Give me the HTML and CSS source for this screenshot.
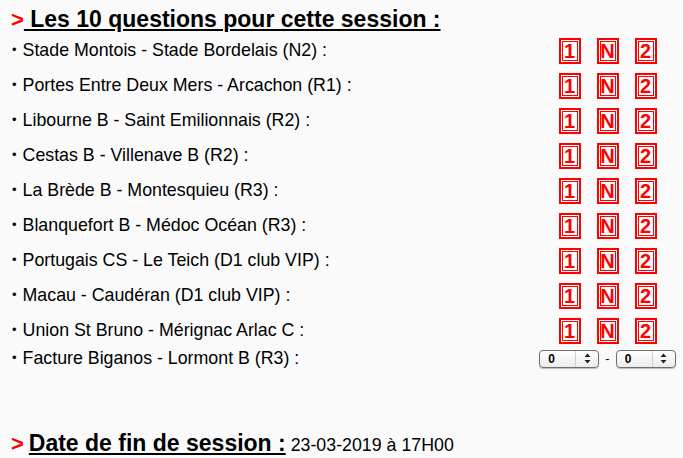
FILE: index.html
```html
<!DOCTYPE html>
<html lang="fr">
<head>
  <meta charset="UTF-8">
  <title>Questions de la session</title>
  <link rel="stylesheet" href="styles.css">
</head>
<body>
  <h2 class="section-title"><span class="arrow">&gt;</span><u> Les 10 questions pour cette session :</u></h2>
  <div class="questions">
    <div class="match">
      <span class="label"><span class="dot">•</span>Stade Montois - Stade Bordelais (N2) :</span>
      <span class="choices"><span class="pick">1</span><span class="pick">N</span><span class="pick">2</span></span>
    </div>
    <div class="match">
      <span class="label"><span class="dot">•</span>Portes Entre Deux Mers - Arcachon (R1) :</span>
      <span class="choices"><span class="pick">1</span><span class="pick">N</span><span class="pick">2</span></span>
    </div>
    <div class="match">
      <span class="label"><span class="dot">•</span>Libourne B - Saint Emilionnais (R2) :</span>
      <span class="choices"><span class="pick">1</span><span class="pick">N</span><span class="pick">2</span></span>
    </div>
    <div class="match">
      <span class="label"><span class="dot">•</span>Cestas B - Villenave B (R2) :</span>
      <span class="choices"><span class="pick">1</span><span class="pick">N</span><span class="pick">2</span></span>
    </div>
    <div class="match">
      <span class="label"><span class="dot">•</span>La Brède B - Montesquieu (R3) :</span>
      <span class="choices"><span class="pick">1</span><span class="pick">N</span><span class="pick">2</span></span>
    </div>
    <div class="match">
      <span class="label"><span class="dot">•</span>Blanquefort B - Médoc Océan (R3) :</span>
      <span class="choices"><span class="pick">1</span><span class="pick">N</span><span class="pick">2</span></span>
    </div>
    <div class="match">
      <span class="label"><span class="dot">•</span>Portugais CS - Le Teich (D1 club VIP) :</span>
      <span class="choices"><span class="pick">1</span><span class="pick">N</span><span class="pick">2</span></span>
    </div>
    <div class="match">
      <span class="label"><span class="dot">•</span>Macau - Caudéran (D1 club VIP) :</span>
      <span class="choices"><span class="pick">1</span><span class="pick">N</span><span class="pick">2</span></span>
    </div>
    <div class="match">
      <span class="label"><span class="dot">•</span>Union St Bruno - Mérignac Arlac C :</span>
      <span class="choices"><span class="pick">1</span><span class="pick">N</span><span class="pick">2</span></span>
    </div>
    <div class="match score-row">
      <span class="label"><span class="dot">•</span>Facture Biganos - Lormont B (R3) :</span>
      <span class="choices score">
        <span class="spinner"><span class="value">0</span><span class="arrows"><svg width="7" height="11" viewBox="0 0 7 11"><path d="M3.5 0.5 L6.5 4 L0.5 4 Z M0.5 7 L6.5 7 L3.5 10.5 Z" fill="#222"/></svg></span></span>
        <span class="dash">-</span>
        <span class="spinner"><span class="value">0</span><span class="arrows"><svg width="7" height="11" viewBox="0 0 7 11"><path d="M3.5 0.5 L6.5 4 L0.5 4 Z M0.5 7 L6.5 7 L3.5 10.5 Z" fill="#222"/></svg></span></span>
      </span>
    </div>
  </div>
  <p class="end-date"><span class="arrow">&gt;</span> <u class="end-title">Date de fin de session :</u> 23-03-2019 à 17H00</p>
</body>
</html>
```

FILE: styles.css
```css
body {
  margin: 0;
  background: #fafafa;
  font-family: "Liberation Sans", Arial, sans-serif;
  color: #000;
}
.section-title {
  margin: 6px 0 0 11px;
  font-size: 23px;
  line-height: 26px;
  font-weight: bold;
}
.arrow {
  color: #f00;
  font-weight: bold;
  font-size: 22px;
}
.questions {
  display: flex;
  flex-direction: column;
}
.match {
  display: grid;
  grid-template-columns: 1fr 151px;
  align-items: center;
  height: 35px;
  font-size: 17.8px;
}
.match.score-row {
  height: 20px;
}
.label {
  padding-left: 12px;
}
.dot {
  font-size: 13px;
  vertical-align: 2px;
  margin-right: 6px;
}
.choices {
  display: flex;
  justify-content: center;
  gap: 16px;
}
.pick {
  width: 22px;
  height: 26px;
  box-sizing: border-box;
  border: 2px solid #f00;
  box-shadow: inset 0 0 0 1px #fff, inset 0 0 0 2px #f00;
  background: #fff;
  color: #f00;
  font-weight: bold;
  font-size: 20px;
  line-height: 22px;
  text-align: center;
}
.choices.score {
  gap: 6px;
  align-items: center;
}
.spinner {
  display: flex;
  width: 60px;
  height: 18px;
  box-sizing: border-box;
  border: 1px solid #6e6e6e;
  border-radius: 4px;
  background: linear-gradient(#fff, #ececec);
  box-shadow: 0 1px 1px rgba(0,0,0,0.25);
}
.spinner .value {
  flex: 1;
  padding-left: 8px;
  font-size: 12px;
  font-weight: bold;
  line-height: 16px;
  border-right: 1px solid #d0d0d0;
}
.spinner .arrows {
  width: 22px;
  display: flex;
  align-items: center;
  justify-content: center;
}
.dash {
  font-size: 13px;
}
.end-date {
  margin: 62px 0 0 11px;
  font-size: 17.8px;
  line-height: 26px;
}
.end-title {
  font-size: 23px;
  font-weight: bold;
}
```
